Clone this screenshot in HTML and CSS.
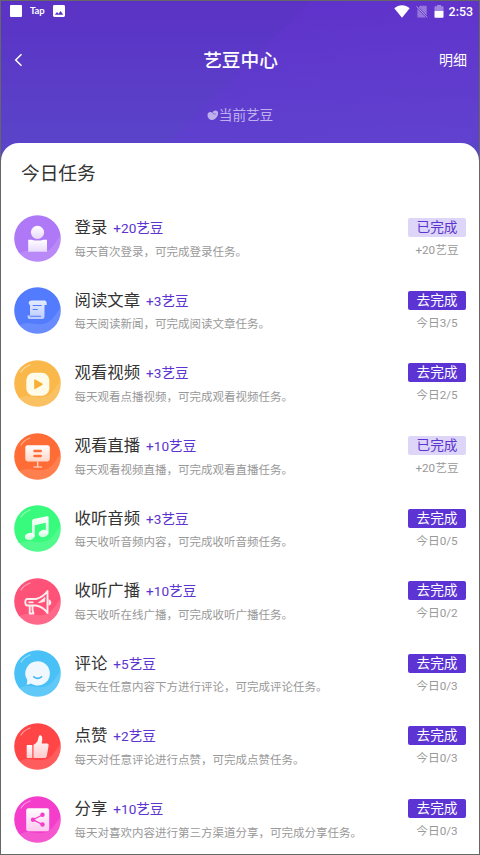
FILE: index.html
```html
<!DOCTYPE html>
<html lang="zh-CN">
<head>
<meta charset="utf-8">
<title>艺豆中心</title>
<link rel="stylesheet" href="styles.css">
</head>
<body>
<svg class="defs" width="0" height="0" aria-hidden="true">
  <defs>
    <linearGradient id="glyph" x1="0" y1="0" x2="0" y2="1"><stop offset="0" stop-color="#fff"/><stop offset="1" stop-color="#fff" stop-opacity=".72"/></linearGradient>
    <clipPath id="disc"><circle cx="23.5" cy="23.5" r="23.3"/></clipPath>
    <g id="wave"><path d="M6 38C16 32 26 42 36 34 42 29 43 24 47 21V47H6Z" fill="#fff" opacity=".13" clip-path="url(#disc)"/></g>
    <path id="shine" d="M7 12C9 8.5 12 6.5 16 5" fill="none" stroke="#fff" stroke-width="1.3" stroke-linecap="round" opacity=".45"/>
  </defs>
</svg>
<div class="screen">
  <header class="top">
    <div class="status">
      <div class="status-left">
        <i class="square"></i><b class="tap">Tap</b>
        <svg width="12" height="12" viewBox="0 0 12 12"><rect width="12" height="12" rx="1.4" fill="#fff"/><path d="M1.8 9.8 4 7l1.5 1.7L7.6 6l2.7 3.8Z" fill="#5a32c5"/></svg>
      </div>
      <div class="status-right">
        <svg class="wifi" width="16" height="13" viewBox="0 0 16 13"><path d="M.3 3.2C4.8-.8 11.200-.8 15.700 3.200L8 12.700Z" fill="#fff"/></svg>
        <svg class="sim" width="12" height="13" viewBox="0 0 12 13"><path d="M4 .8h6.700v9.800L2.600 2.200ZM1.400 3.600l8.500 8.800H1.400Z" fill="#fff" opacity=".33"/><path d="M.5 1.300 11.200 12.400" stroke="#fff" stroke-width="1" opacity=".5"/></svg>
        <svg class="battery" width="10" height="13" viewBox="0 0 10 13"><path d="M3 0h4v1.300h1.700q.8 0 .8.800V6H.5V2.100q0-.8.8-.8H3Z" fill="#fff" opacity=".4"/><path d="M.5 6h9v6q0 .8-.8.800H1.300q-.8 0-.8-.8Z" fill="#fff"/></svg>
        <span class="clock">2:53</span>
      </div>
    </div>
    <nav class="nav">
      <svg class="back" width="9" height="14" viewBox="0 0 9 14"><path d="M7.500 1.300 1.700 7l5.800 5.700" fill="none" stroke="#fff" stroke-width="1.500"/></svg>
      <h1>艺豆中心</h1>
      <span class="detail">明细</span>
    </nav>
    <div class="balance">
      <svg width="12" height="11" viewBox="0 0 12 11"><path d="M.5 5.200C.5 2.800 2.500 1.700 4.300 2.200Q5.100 2.400 5.600 2.700C6 .9 8 .2 9.500.7 11.500 1.300 11.500 4 10.300 6.200 8.900 8.900 6.500 10.300 4 9.900 2 9.500.6 7.500.5 5.200Z" fill="#beb0ee"/><path d="M5.600 2.600Q6.700 5 8.700 3.900" fill="none" stroke="#5c3dca" stroke-width=".6"/></svg>
      <span>当前艺豆</span>
    </div>
  </header>
  <main class="sheet">
    <h2>今日任务</h2>
    <ul class="tasks">
      <li class="task">
        <svg class="icon" viewBox="0 0 47 47"><circle cx="23.500" cy="23.500" r="23.300" fill="#af78f7"/><use href="#wave"/><g fill="url(#glyph)"><circle cx="23.500" cy="17.300" r="6.600"/><path d="M14.200 24.700H17.500Q23.500 26.500 29.500 24.700H33V36.700H14.200Z"/></g></svg>
        <div class="copy"><div class="name">登录<em>+20艺豆</em></div><p>每天首次登录，可完成登录任务。</p></div>
        <div class="action"><span class="btn done">已完成</span><small>+20艺豆</small></div>
      </li>
      <li class="task">
        <svg class="icon" viewBox="0 0 47 47"><circle cx="23.500" cy="23.500" r="23.300" fill="#527bfd"/><use href="#wave"/><path d="M17.500 13.500H30.500Q33 13.500 32.700 18H30.500V29.500Q30.500 32 28 32H15.500Q13.500 32 13.500 28.500H16V18Q14.500 17.500 14.700 15.500 15 13.500 17.500 13.500Z" fill="url(#glyph)" opacity=".85"/><path d="M18.700 18.500h9M18.700 22.500h5M16 29.200h11" stroke="#527bfd" stroke-width="1.100"/></svg>
        <div class="copy"><div class="name">阅读文章<em>+3艺豆</em></div><p>每天阅读新闻，可完成阅读文章任务。</p></div>
        <div class="action"><span class="btn">去完成</span><small>今日3/5</small></div>
      </li>
      <li class="task">
        <svg class="icon" viewBox="0 0 47 47"><circle cx="23.500" cy="23.500" r="23.300" fill="#fab84b"/><use href="#wave"/><use href="#shine"/><rect x="12.300" y="12.800" width="23" height="23" rx="7.500" fill="#fffbe9"/><path d="M20.200 20.200Q20.200 19 21.300 19.600L28.300 23.600Q29.300 24.300 28.300 25L21.300 29Q20.200 29.500 20.200 28.300Z" fill="#f9ae35"/></svg>
        <div class="copy"><div class="name">观看视频<em>+3艺豆</em></div><p>每天观看点播视频，可完成观看视频任务。</p></div>
        <div class="action"><span class="btn">去完成</span><small>今日2/5</small></div>
      </li>
      <li class="task">
        <svg class="icon" viewBox="0 0 47 47"><circle cx="23.500" cy="23.500" r="23.300" fill="#ff6c35"/><use href="#wave"/><use href="#shine"/><rect x="11.300" y="12.200" width="24.500" height="16.200" rx="2.400" fill="url(#glyph)"/><path d="M23.700 28.400v5M19.500 34h8.600" stroke="#ffe2d8" stroke-width="1.200"/><path d="M20.500 18h6.200M20.500 23h6.200" stroke="#ff6c35" stroke-width="2.500" stroke-linecap="round"/></svg>
        <div class="copy"><div class="name">观看直播<em>+10艺豆</em></div><p>每天观看视频直播，可完成观看直播任务。</p></div>
        <div class="action"><span class="btn done">已完成</span><small>+20艺豆</small></div>
      </li>
      <li class="task">
        <svg class="icon" viewBox="0 0 47 47"><circle cx="23.500" cy="23.500" r="23.300" fill="#38fa7c"/><use href="#wave"/><use href="#shine"/><g fill="url(#glyph)"><ellipse cx="15.700" cy="31.400" rx="4.900" ry="3.600" transform="rotate(-12 15.700 31.400)"/><ellipse cx="29.500" cy="28.500" rx="4.900" ry="3.600" transform="rotate(-12 29.500 28.500)"/><path d="M18 16Q18 14.300 19.700 13.900L33 11.200Q34.600 11 34.600 12.500V28.500H31.800V17.800L20.800 20.300V31.500H18Z"/></g></svg>
        <div class="copy"><div class="name">收听音频<em>+3艺豆</em></div><p>每天收听音频内容，可完成收听音频任务。</p></div>
        <div class="action"><span class="btn">去完成</span><small>今日0/5</small></div>
      </li>
      <li class="task">
        <svg class="icon" viewBox="0 0 47 47"><circle cx="23.500" cy="23.500" r="23.300" fill="#ff5278"/><use href="#wave"/><use href="#shine"/><g fill="none" stroke="#ffecee" stroke-width="1.900" stroke-linejoin="round"><path d="M13.500 21H22Q29.500 19 33.500 13V35Q29.500 29 22 27.500H13.500Q11.300 27.500 11.300 24.200T13.500 21ZM15.700 27.500V35.500H19.500L18.500 32V27.500"/><path d="M14.500 24.300h5" stroke-width="1.700"/><path d="M24.500 24.700 31 19.500 30.500 23.500Z" stroke-width=".8" fill="#ffecee"/><path d="M34.500 21Q37.300 22 37.300 24.500T34.500 27.500Z" stroke="none" fill="#ffecee"/></g></svg>
        <div class="copy"><div class="name">收听广播<em>+10艺豆</em></div><p>每天收听在线广播，可完成收听广播任务。</p></div>
        <div class="action"><span class="btn">去完成</span><small>今日0/2</small></div>
      </li>
      <li class="task">
        <svg class="icon" viewBox="0 0 47 47"><circle cx="23.500" cy="23.500" r="23.300" fill="#49c1f6"/><use href="#wave"/><use href="#shine"/><path d="M23.700 11.200A12.200 12.200 0 1 1 17 33.600Q14.800 34.900 12.300 34.500 13.500 33 13.300 30A12.200 12.200 0 0 1 23.700 11.200Z" fill="#f1f7ff"/><path d="M19.800 26.800Q23.700 30 27.500 26.800" fill="none" stroke="#49baf5" stroke-width="1.700" stroke-linecap="round"/></svg>
        <div class="copy"><div class="name">评论<em>+5艺豆</em></div><p>每天在任意内容下方进行评论，可完成评论任务。</p></div>
        <div class="action"><span class="btn">去完成</span><small>今日0/3</small></div>
      </li>
      <li class="task">
        <svg class="icon" viewBox="0 0 47 47"><circle cx="23.500" cy="23.500" r="23.300" fill="#ff4546"/><use href="#wave"/><use href="#shine"/><g fill="url(#glyph)"><rect x="12.700" y="22" width="5.600" height="13" rx=".8"/><path d="M19.500 21.800Q23.500 20 24.300 15.500 24.800 11.700 26.500 12.200 29.300 13 27.700 20.500H33Q35 20.500 34.600 22.500L32.800 33.200Q32.500 35 30.800 35H19.500Z"/></g></svg>
        <div class="copy"><div class="name">点赞<em>+2艺豆</em></div><p>每天对任意评论进行点赞，可完成点赞任务。</p></div>
        <div class="action"><span class="btn">去完成</span><small>今日0/3</small></div>
      </li>
      <li class="task">
        <svg class="icon" viewBox="0 0 47 47"><circle cx="23.500" cy="23.500" r="23.300" fill="#f43ecb"/><use href="#wave"/><use href="#shine"/><rect x="12.200" y="12.200" width="23" height="23" rx="2.200" fill="url(#glyph)"/><path d="M28.300 19 19 23.700 28.300 28.500" fill="none" stroke="#f43ecb" stroke-width="1.300"/><g fill="#f43ecb"><circle cx="19" cy="23.700" r="2.200"/><circle cx="28.500" cy="18.800" r="2.200"/><circle cx="28.500" cy="28.500" r="2.200"/></g></svg>
        <div class="copy"><div class="name">分享<em>+10艺豆</em></div><p>每天对喜欢内容进行第三方渠道分享，可完成分享任务。</p></div>
        <div class="action"><span class="btn">去完成</span><small>今日0/3</small></div>
      </li>
    </ul>
  </main>
</div>
</body>
</html>
```
FILE: styles.css
```css
* { box-sizing: border-box; margin: 0; padding: 0; }
body { width: 480px; height: 855px; overflow: hidden; font-family: Roboto, "Noto Sans CJK SC", sans-serif; }
svg { display: block; flex: none; }
.defs { position: absolute; }
.screen {
  width: 480px; height: 855px; overflow: hidden;
  border: 1px solid #666;
  background: linear-gradient(#5b32c5, #5a46ca 160px);
}
.top {
  height: 142px; color: #fff;
  background: linear-gradient(135deg, transparent 49.900%, rgba(112, 50, 225, .2) 50%, rgba(112, 60, 220, .3));
}
.status { height: 22px; display: flex; justify-content: space-between; padding: 0 6px 2px 9px; }
.status-left, .status-right { display: flex; align-items: center; }
.square { width: 12px; height: 12px; border-radius: 1px; background: #fff; }
.tap { width: 15px; margin: 0 8px; font: 700 9.500px/12px Lato, sans-serif; letter-spacing: -.1px; }
.wifi { margin-right: 6px; }
.sim { margin-right: 6px; }
.battery { margin-right: 5px; }
.clock { font-size: 12.400px; line-height: 20px; font-weight: 500; padding-top: 1px; }
.nav { height: 46px; margin-top: 14px; display: grid; grid-template-columns: 60px 1fr 60px; align-items: center; padding: 0 12px 0 13px; }
.nav h1 { font-size: 18.700px; line-height: 28px; font-weight: 500; text-align: center; padding-top: 1px; }
.detail { font-size: 14px; line-height: 20px; text-align: right; }
.balance { height: 20px; margin-top: 22px; display: flex; align-items: center; justify-content: center; font-size: 13.600px; line-height: 20px; color: #beb0ee; }
.sheet { height: 711px; background: #fff; border-radius: 18px 18px 0 0; padding-top: 17px; }
.sheet h2 { font-size: 18.700px; line-height: 28px; font-weight: 400; color: #333; padding-left: 20px; }
.tasks { list-style: none; padding-top: 14px; }
.task { height: 72.600px; display: flex; align-items: center; padding: 0 13px 0 12.500px; }
.icon { width: 47px; height: 47px; margin-right: 14px; }
.copy { flex: 1; white-space: nowrap; }
.name { display: flex; align-items: center; height: 26px; padding-top: 1px; font-size: 16.400px; line-height: 26px; color: #333; }
.name em { font-style: normal; font-size: 13.600px; color: #5c34cf; margin-left: 6px; }
.copy p { height: 20px; font-size: 11.500px; line-height: 20px; color: #999; margin-top: 1px; }
.action { width: 58px; display: flex; flex-direction: column; align-items: center; padding-top: 1px; }
.btn { width: 58px; height: 19px; border-radius: 2px; background: #5c34d4; color: #fff; font-size: 13.700px; line-height: 19px; text-align: center; }
.btn.done { background: #ddd6f8; color: #5c34cf; }
.action small { height: 18px; margin-top: 4px; font-size: 11.700px; line-height: 18px; color: #999; white-space: nowrap; }
```
